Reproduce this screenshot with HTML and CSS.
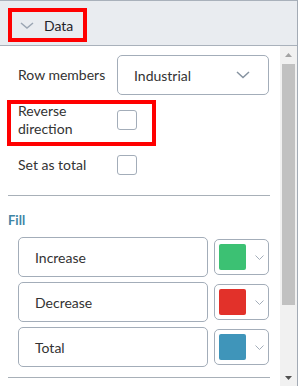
FILE: index.html
```html
<!DOCTYPE html>
<html>
<head>
  <meta charset="utf-8" />
  <title>Data Properties</title>
  <link rel="stylesheet" href="styles.css">
</head>
<body>
  <div class="panel">
    <div class="section-header">
      <div class="section-toggle highlight">
        <svg class="chevron" width="14" height="7" viewBox="0 0 14 7"><polyline points="1,1 7,6 13,1" /></svg>
        <span>Data</span>
      </div>
    </div>

    <div class="panel-body">
      <div class="content">
        <div class="field-row row-members">
          <label class="field-label">Row members</label>
          <div class="dropdown">
            <span>Industrial</span>
            <svg class="dropdown-caret" width="14" height="8" viewBox="0 0 14 8"><polyline points="1,1 7,6.5 13,1" /></svg>
          </div>
        </div>

        <div class="field-row check-row highlight">
          <label class="field-label">Reverse direction</label>
          <span class="checkbox"></span>
        </div>

        <div class="field-row check-row">
          <label class="field-label">Set as total</label>
          <span class="checkbox"></span>
        </div>

        <hr class="divider">

        <div class="group-title">Fill</div>
        <div class="color-list">
          <div class="color-row">
            <div class="text-box">Increase</div>
            <div class="color-picker">
              <span class="swatch swatch-green"></span>
              <svg class="picker-caret" width="9" height="5" viewBox="0 0 9 5"><polyline points="0.5,0.5 4.5,4.5 8.5,0.5" /></svg>
            </div>
          </div>
          <div class="color-row">
            <div class="text-box">Decrease</div>
            <div class="color-picker">
              <span class="swatch swatch-red"></span>
              <svg class="picker-caret" width="9" height="5" viewBox="0 0 9 5"><polyline points="0.5,0.5 4.5,4.5 8.5,0.5" /></svg>
            </div>
          </div>
          <div class="color-row">
            <div class="text-box">Total</div>
            <div class="color-picker">
              <span class="swatch swatch-blue"></span>
              <svg class="picker-caret" width="9" height="5" viewBox="0 0 9 5"><polyline points="0.5,0.5 4.5,4.5 8.5,0.5" /></svg>
            </div>
          </div>
        </div>

        <hr class="divider divider-last">
      </div>

      <div class="scrollbar">
        <div class="scroll-btn">
          <svg width="7" height="4" viewBox="0 0 7 4"><polygon class="arrow-off" points="3.5,0 7,4 0,4" /></svg>
        </div>
        <div class="scroll-track">
          <div class="scroll-thumb"></div>
        </div>
        <div class="scroll-btn">
          <svg width="7" height="4" viewBox="0 0 7 4"><polygon class="arrow-on" points="0,0 7,0 3.5,4" /></svg>
        </div>
      </div>
    </div>
  </div>
</body>
</html>
```

FILE: styles.css
```css
* {
  box-sizing: border-box;
}

body {
  margin: 0;
  font-family: Lato, 'Open Sans', sans-serif;
  color: #333;
  background: #fff;
}

.panel {
  width: 298px;
  height: 386px;
  border-right: 1px solid #a3abb5;
  display: flex;
  flex-direction: column;
  overflow: hidden;
  background: #fff;
}

/* red annotation frame */
.highlight {
  border: 4px solid #f00;
}

.section-header {
  height: 46px;
  flex-shrink: 0;
  border-top: 1px solid #a9b1bb;
  border-bottom: 1px solid #a9b1bb;
  background: #e9ecf0;
  padding: 7px 0 0 8px;
}

.section-toggle {
  display: inline-flex;
  align-items: center;
  height: 34px;
  padding: 0 10px 0 8px;
  gap: 10px;
  font-size: 14px;
  color: #1f2329;
}

.chevron polyline {
  fill: none;
  stroke: #9ba6b3;
  stroke-width: 1.5;
}

.panel-body {
  flex: 1;
  display: flex;
  min-height: 0;
}

.content {
  flex: 1;
  padding: 9px 10px 0 8px;
  overflow: hidden;
}

.field-row {
  display: flex;
  align-items: center;
  padding-left: 10px;
}

.field-label {
  width: 99px;
  font-size: 14px;
  line-height: 18px;
  color: #333;
}

.row-members {
  height: 40px;
}

.dropdown {
  width: 152px;
  height: 40px;
  border: 1px solid #a3adb9;
  border-radius: 5px;
  display: flex;
  align-items: center;
  justify-content: space-between;
  padding: 0 18px 0 16px;
  font-size: 14px;
  color: #333;
}

.dropdown-caret polyline {
  fill: none;
  stroke: #8693a0;
  stroke-width: 1.5;
}

.check-row {
  height: 30px;
  margin-top: 4px;
}

.check-row.highlight {
  width: fit-content;
  height: 46px;
  margin-top: 5px;
  margin-left: -1px;
  padding: 0 15px 6px 7px;
}

.checkbox {
  width: 20px;
  height: 20px;
  border: 1px solid #a3adb9;
  border-radius: 3px;
}

.divider {
  border: 0;
  border-top: 1px solid #a8b0b8;
  height: 0;
  margin: 15px 0 0;
}

.divider-last {
  margin-top: 10px;
}

.group-title {
  margin-top: 14px;
  font-size: 13px;
  line-height: 20px;
  font-weight: 700;
  color: #3f85a5;
}

.color-list {
  margin-top: 7px;
  padding-left: 10px;
  display: flex;
  flex-direction: column;
  gap: 5px;
}

.color-row {
  display: flex;
  align-items: center;
  gap: 6px;
  height: 40px;
}

.text-box {
  width: 190px;
  height: 40px;
  border: 1px solid #a3adb9;
  border-radius: 5px;
  display: flex;
  align-items: center;
  padding-left: 16px;
  font-size: 14px;
  color: #333;
}

.color-picker {
  width: 55px;
  height: 36px;
  border: 1px solid #a3adb9;
  border-radius: 5px;
  display: flex;
  align-items: center;
  padding-left: 4px;
  gap: 9px;
}

.swatch {
  width: 27px;
  height: 26px;
  border-radius: 2px;
}

.swatch-green { background: #3cc173; }
.swatch-red { background: #e2312a; }
.swatch-blue { background: #3f95ba; }

.picker-caret polyline {
  fill: none;
  stroke: #a3adb9;
  stroke-width: 1;
}

.scrollbar {
  width: 17px;
  flex-shrink: 0;
  background: #f1f1f1;
  display: flex;
  flex-direction: column;
}

.scroll-btn {
  height: 17px;
  display: flex;
  align-items: center;
  justify-content: center;
}

.scroll-btn svg {
  display: block;
}

.arrow-off { fill: #a3a3a3; }
.arrow-on { fill: #505050; }

.scroll-track {
  flex: 1;
  padding: 1px 2px;
}

.scroll-thumb {
  height: 241px;
  background: #c1c1c1;
}
```
